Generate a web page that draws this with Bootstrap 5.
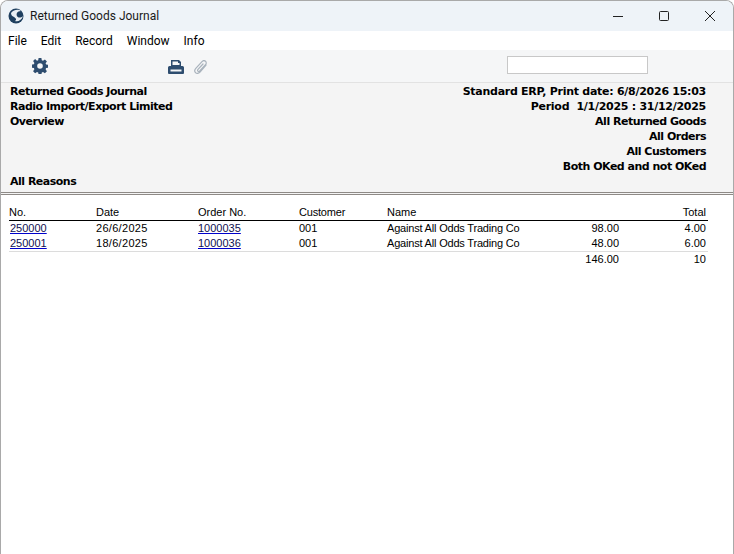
<!DOCTYPE html>
<html lang="en">
<head>
  <meta charset="UTF-8">
  <meta name="viewport" content="width=device-width, initial-scale=1">
  <title>Returned Goods Journal</title>
  <link href="https://cdn.jsdelivr.net/npm/bootstrap@5.3.3/dist/css/bootstrap.min.css" rel="stylesheet">
  <style>
    html, body { height: 100%; background: #fff; }
    body { font-family: "Liberation Sans", sans-serif; color: #000; overflow: hidden; }
    .win-frame { height: 554px; border: 1px solid #a9a9a9; border-bottom: 0; border-radius: 8px 8px 0 0; overflow: hidden; }
    .title-bar { height: 30px; background: #eef3f8; font-family: Roboto, sans-serif; font-size: 12px; padding-left: 7px; }
    .title-bar .caption { margin-left: 6px; color: #1a1a1a; }
    .win-btn { width: 46px; height: 30px; }
    .menu-bar { height: 19px; background: #fff; font-family: Roboto, sans-serif; font-size: 12px; padding-left: 7px; gap: 14px; }
    .tool-bar { height: 33px; background: #f5f6f7; border-bottom: 1px solid #e2e2e2; padding-left: 31px; }
    .print-ico { margin-left: 120px; margin-top: 2px; }
    .clip-ico { margin-left: 10px; margin-top: 2px; }
    .tool-search { width: 141px; height: 18px; background: #fff; border: 1px solid #c8c8c8; margin-left: 299px; margin-top: -2px; }
    .report-head { height: 110px; background: #f4f4f4; font-family: "DejaVu Sans", sans-serif; font-weight: 700; font-size: 11px; line-height: 15px; padding: 1px 27px 0 9px; letter-spacing: -.5px; border-bottom: 1px solid #8e8a86; }
    .report-head .digit-line { letter-spacing: -.27px; }
    .head-note { margin-bottom: 3px; }
    .head-gap { height: 2px; background: #f4f4f4; border-bottom: 1px solid #8e8a86; }
    .report-body { padding: 10px 25px 0 8px; font-size: 11px; line-height: 15px; }
    .journal { width: 100%; table-layout: fixed; border-collapse: collapse; }
    .journal th { font-weight: 400; height: 15px; padding: 0; border-bottom: 1px solid #000; }
    .journal td { padding: 0; height: 15px; }
    .journal .last-row td { border-bottom: 1px solid #dcdcdc; }
    .journal .sum-row td { line-height: 14px; height: 14px; }
    .journal a { color: #101050; text-decoration-color: #0000cc; }
    .journal td.cell-link { padding-left: 1px; }
    .journal .end-col { padding-right: 2px; }
    .journal .date-col { letter-spacing: .3px; }
    .journal .name-col { letter-spacing: -.19px; }
  </style>
</head>
<body>
  <div class="win-frame">
    <div class="title-bar d-flex align-items-center">
      <svg width="16" height="16" viewBox="0 0 16 16">
        <circle cx="8" cy="8" r="7.5" fill="#1f3f5f"/>
        <path d="M3 5 C6 1 11 1 13 3 C9 3 8 6 9 8 C10 10 13 10 15 8 C14 12 10 14 7 13 C9 12 8 10 6 9 C4 8 3 7 3 5Z" fill="#e9eef3"/>
      </svg>
      <span class="caption">Returned Goods Journal</span>
      <div class="ms-auto d-flex">
        <div class="win-btn d-flex align-items-center justify-content-center">
          <svg width="12" height="12" viewBox="0 0 12 12"><path d="M1 6.500H11" stroke="#222" fill="none"/></svg>
        </div>
        <div class="win-btn d-flex align-items-center justify-content-center">
          <svg width="12" height="12" viewBox="0 0 12 12"><rect x="1.500" y="1.500" width="9" height="9" rx="1" stroke="#222" fill="none"/></svg>
        </div>
        <div class="win-btn d-flex align-items-center justify-content-center">
          <svg width="12" height="12" viewBox="0 0 12 12"><path d="M1 1L11 11M11 1L1 11" stroke="#222" fill="none"/></svg>
        </div>
      </div>
    </div>

    <div class="menu-bar d-flex align-items-center">
      <span>File</span><span>Edit</span><span>Record</span><span>Window</span><span>Info</span>
    </div>

    <div class="tool-bar d-flex align-items-center">
      <svg width="16" height="16" viewBox="0 0 16 16">
        <path fill="#2e4d6f" fill-rule="evenodd" d="M6.600 0h2.800l.4 2.200 1.200.5 1.900-1.300 2 2-1.300 1.900.5 1.200 2.200.4v2.800l-2.200.4-.5 1.200 1.300 1.900-2 2-1.900-1.300-1.200.5-.4 2.200H6.600l-.4-2.200-1.200-.5-1.900 1.300-2-2 1.300-1.900-.5-1.200-2.200-.4V6.600l2.200-.4.5-1.200-1.300-1.900 2-2L5 2.700l1.200-.5zM8 5.200a2.800 2.800 0 1 0 0 5.600 2.800 2.800 0 0 0 0-5.600z"/>
      </svg>
      <svg class="print-ico" width="16" height="14" viewBox="0 0 16 14">
        <path fill="#2e4d6f" fill-rule="evenodd" d="M3 0h8l2 2v4h1.500A1.500 1.500 0 0 1 16 7.500V13a1 1 0 0 1-1 1H1a1 1 0 0 1-1-1V7.500A1.500 1.500 0 0 1 1.500 6H3zM4.500 1.500V5h7V3H10V1.500zM2.500 9.500v2h11v-2z"/>
      </svg>
      <svg class="clip-ico" width="14" height="15" viewBox="0 0 14 15">
        <path fill="none" stroke="#a9b3bd" stroke-width="1.200" stroke-linecap="round" d="M12 5 6 12c-1.500 1.700-3.500 1.700-4.500.6s-1-2.800.3-4.300L8 1.600c1-1.100 2.500-1.200 3.500-.3s1 2.300 0 3.400L5.700 11c-.6.600-1.300.7-1.800.2s-.4-1.200.1-1.800l5-5.400"/>
      </svg>
      <div class="tool-search"></div>
    </div>

    <div class="report-head d-flex justify-content-between">
      <div class="d-flex flex-column">
        <div>Returned Goods Journal</div>
        <div>Radio Import/Export Limited</div>
        <div>Overview</div>
        <div class="mt-auto head-note">All Reasons</div>
      </div>
      <div class="text-end">
        <div class="digit-line">Standard ERP, Print date: 6/8/2026 15:03</div>
        <div class="digit-line">Period&nbsp; 1/1/2025 : 31/12/2025</div>
        <div>All Returned Goods</div>
        <div>All Orders</div>
        <div>All Customers</div>
        <div>Both OKed and not OKed</div>
      </div>
    </div>
    <div class="head-gap"></div>

    <div class="report-body">
      <table class="journal">
        <colgroup>
          <col style="width:87px"><col style="width:102px"><col style="width:101px"><col style="width:88px"><col style="width:149px"><col style="width:83px"><col>
        </colgroup>
        <thead>
          <tr><th>No.</th><th>Date</th><th>Order No.</th><th class="name-col">Customer</th><th>Name</th><th></th><th class="text-end end-col">Total</th></tr>
        </thead>
        <tbody>
          <tr>
            <td class="cell-link"><a href="#">250000</a></td><td class="date-col">26/6/2025</td><td><a href="#">1000035</a></td><td>001</td>
            <td class="text-nowrap name-col">Against All Odds Trading Co</td><td class="text-end">98.00</td><td class="text-end end-col">4.00</td>
          </tr>
          <tr class="last-row">
            <td class="cell-link"><a href="#">250001</a></td><td class="date-col">18/6/2025</td><td><a href="#">1000036</a></td><td>001</td>
            <td class="text-nowrap name-col">Against All Odds Trading Co</td><td class="text-end">48.00</td><td class="text-end end-col">6.00</td>
          </tr>
          <tr class="sum-row">
            <td></td><td></td><td></td><td></td><td></td><td class="text-end">146.00</td><td class="text-end end-col">10</td>
          </tr>
        </tbody>
      </table>
    </div>
  </div>

  <script src="https://cdn.jsdelivr.net/npm/bootstrap@5.3.3/dist/js/bootstrap.bundle.min.js"></script>
</body>
</html>
